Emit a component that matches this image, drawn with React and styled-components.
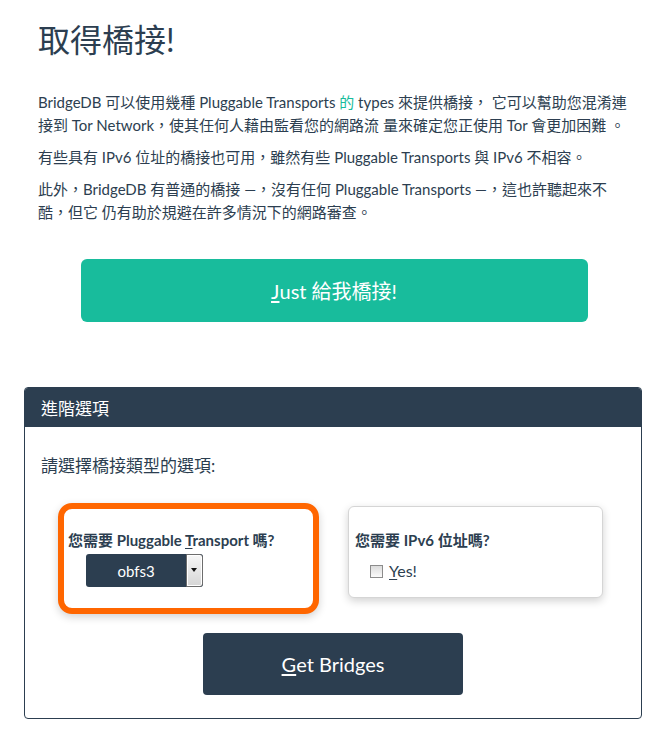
import styled, { createGlobalStyle } from 'styled-components';

const GlobalStyle = createGlobalStyle`
  html, body {
    margin: 0;
    padding: 0;
    background: #fff;
  }
  body {
    font-family: Lato, "Noto Sans CJK TC", sans-serif;
    color: #2c3e50;
    font-size: 15px;
  }
`;

function App() {
  return (
    <>
      <GlobalStyle />
      <Intro>
        <Title>取得橋接!</Title>
        <Para>
          BridgeDB 可以使用幾種 Pluggable Transports <Accent>的</Accent> types
          來提供橋接， 它可以幫助您混淆連接到 Tor Network，使其任何人藉由監看您的網路流
          量來確定您正使用 Tor 會更加困難 。
        </Para>
        <Para>有些具有 IPv6 位址的橋接也可用，雖然有些 Pluggable Transports 與 IPv6 不相容。</Para>
        <Para>
          此外，BridgeDB 有普通的橋接 —，沒有任何 Pluggable Transports —，這也許聽起來不酷，但它
          仍有助於規避在許多情況下的網路審查。
        </Para>
        <JustButton>
          <Key>J</Key>ust 給我橋接!
        </JustButton>
      </Intro>

      <Panel>
        <PanelHeader>進階選項</PanelHeader>
        <PanelBody>
          <Hint>請選擇橋接類型的選項:</Hint>
          <OptionRow>
            <OptionCard highlighted>
              <OptionLabel>
                您需要 Pluggable <Key>T</Key>ransport 嗎?
              </OptionLabel>
              <SelectBox>
                <SelectValue>obfs3</SelectValue>
                <SelectArrow />
              </SelectBox>
            </OptionCard>
            <OptionCard>
              <OptionLabel>您需要 IPv6 位址嗎?</OptionLabel>
              <CheckRow>
                <CheckBox type="checkbox" />
                <span>
                  <Key>Y</Key>es!
                </span>
              </CheckRow>
            </OptionCard>
          </OptionRow>
          <GetButton>
            <Key>G</Key>et Bridges
          </GetButton>
        </PanelBody>
      </Panel>
    </>
  );
}

const Intro = styled.div`
  width: 592px;
  padding-left: 38px;
`;

const Title = styled.h1`
  margin: 22px 0 34px;
  font-size: 32px;
  line-height: 35px;
  font-weight: 400;
`;

const Para = styled.p`
  margin: 0 0 9px;
  font-size: 15px;
  line-height: 23px;
`;

const Accent = styled.span`
  color: #18bc9c;
`;

const Key = styled.u`
  text-decoration: underline;
  text-underline-offset: 2px;
`;

const JustButton = styled.div`
  display: flex;
  align-items: center;
  justify-content: center;
  width: 507px;
  height: 63px;
  margin: 35px auto 0;
  background: #18bc9c;
  color: #fff;
  font-size: 20px;
  border-radius: 6px;
`;

const Panel = styled.section`
  box-sizing: border-box;
  width: 618px;
  margin: 65px 0 0 24px;
  border: 1px solid #2c3e50;
  border-radius: 4px;
  overflow: hidden;
`;

const PanelHeader = styled.div`
  height: 39px;
  display: flex;
  align-items: center;
  padding-left: 16px;
  background: #2c3e50;
  color: #fff;
  font-size: 17px;
`;

const PanelBody = styled.div`
  padding: 27px 16px 23px;
`;

const Hint = styled.div`
  font-size: 17px;
  line-height: 24px;
`;

const OptionRow = styled.div`
  display: flex;
  align-items: flex-start;
  gap: 29px;
  margin-top: 25px;
  padding-left: 17px;
`;

const OptionCard = styled.div`
  box-sizing: border-box;
  width: ${p => (p.highlighted ? '261px' : '255px')};
  margin-top: ${p => (p.highlighted ? '0' : '3px')};
  padding: ${p => (p.highlighted ? '21px 4px 21px' : '23px 6px 15px')};
  border: ${p => (p.highlighted ? '6px solid #ff6600' : '1px solid #d5d5d5')};
  border-radius: ${p => (p.highlighted ? '14px' : '6px')};
  background: #fff;
  box-shadow: 0 3px 9px rgba(0, 0, 0, 0.18);
`;

const OptionLabel = styled.div`
  font-size: 15px;
  line-height: 20px;
  font-weight: 700;
`;

const SelectBox = styled.div`
  display: flex;
  width: 117px;
  height: 33px;
  margin: 4px 0 0 18px;
  background: #2c3e50;
  border-radius: 3px;
  overflow: hidden;
`;

const SelectValue = styled.div`
  flex: 1;
  display: flex;
  align-items: center;
  justify-content: center;
  color: #fff;
  font-size: 15px;
`;

const SelectArrow = styled.div`
  position: relative;
  box-sizing: border-box;
  width: 17px;
  border: 1px solid #6d6d6d;
  border-radius: 0 3px 3px 0;
  background: linear-gradient(#f7f7f7, #d6d6d6);
  box-shadow: inset 0 0 0 1px #fff;
  &::after {
    content: '';
    position: absolute;
    left: 4px;
    top: 13px;
    border-left: 3.5px solid transparent;
    border-right: 3.5px solid transparent;
    border-top: 4px solid #111;
  }
`;

const CheckRow = styled.label`
  display: flex;
  align-items: center;
  gap: 6px;
  margin: 10px 0 0 15px;
  font-size: 16px;
  line-height: 22px;
`;

const CheckBox = styled.input`
  appearance: none;
  width: 13px;
  height: 13px;
  margin: 0;
  border: 1px solid #8c8c8c;
  background: linear-gradient(#dcdcdc, #fafafa);
`;

const GetButton = styled.div`
  display: flex;
  align-items: center;
  justify-content: center;
  width: 260px;
  height: 62px;
  margin: 19px auto 0;
  background: #2c3e50;
  color: #fff;
  font-size: 20px;
  border-radius: 4px;
`;

export default App;
